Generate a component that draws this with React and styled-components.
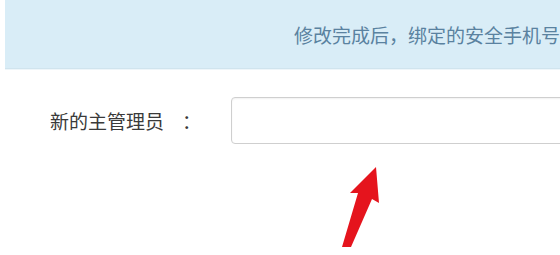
import React from 'react'
import styled, { createGlobalStyle } from 'styled-components';

const GlobalStyle = createGlobalStyle`
  html, body {
    margin: 0;
    padding: 0;
    background: #fff;
  }
  body {
    font-family: "Noto Sans CJK SC", "Noto Sans", sans-serif;
    overflow: hidden;
  }
`;

const Page = styled.div`
  position: relative;
  width: 560px;
  height: 255px;
  padding-left: 5px;
  box-sizing: border-box;
  overflow: hidden;
`;

const Notice = styled.div`
  display: flex;
  align-items: center;
  height: 68px;
  padding-left: 289px;
  background: #d9edf7;
  border-bottom: 1px solid #d0e4ee;
  box-shadow: 0 1px 0 #eef6fa;
  color: #5a82a0;
  font-size: 19px;
  white-space: nowrap;
  overflow: hidden;
`;

const FormRow = styled.div`
  display: grid;
  grid-template-columns: 226px 400px;
  align-items: center;
  margin-top: 28px;
`;

const Label = styled.label`
  padding-left: 45px;
  color: #3a3a3a;
  font-size: 19px;
  white-space: nowrap;
`;

const Colon = styled.span`
  margin-left: 18px;
`;

const Input = styled.input`
  width: 100%;
  height: 47px;
  box-sizing: border-box;
  border: 1px solid #cfcfcf;
  border-radius: 4px;
  box-shadow: inset 0 1px 2px rgba(0, 0, 0, 0.06);
  outline: none;
  font-size: 16px;
  padding: 0 12px;
`;

const Arrow = styled.svg`
  position: absolute;
  left: 0;
  top: 0;
  pointer-events: none;
`;

const App = () => (
  <Page>
    <GlobalStyle />
    <Notice>修改完成后，绑定的安全手机号将变更为新主管理员的手机号</Notice>
    <FormRow>
      <Label>新的主管理员<Colon>：</Colon></Label>
      <Input type="text" />
    </FormRow>
    <Arrow width="560" height="255" viewBox="0 0 560 255">
      <path
        d="M376 167 L379 203 L372 199 L351 247 L342 247 L358 193 L350 193 Z"
        fill="#e5141d"
      />
    </Arrow>
  </Page>
);

export default App;
